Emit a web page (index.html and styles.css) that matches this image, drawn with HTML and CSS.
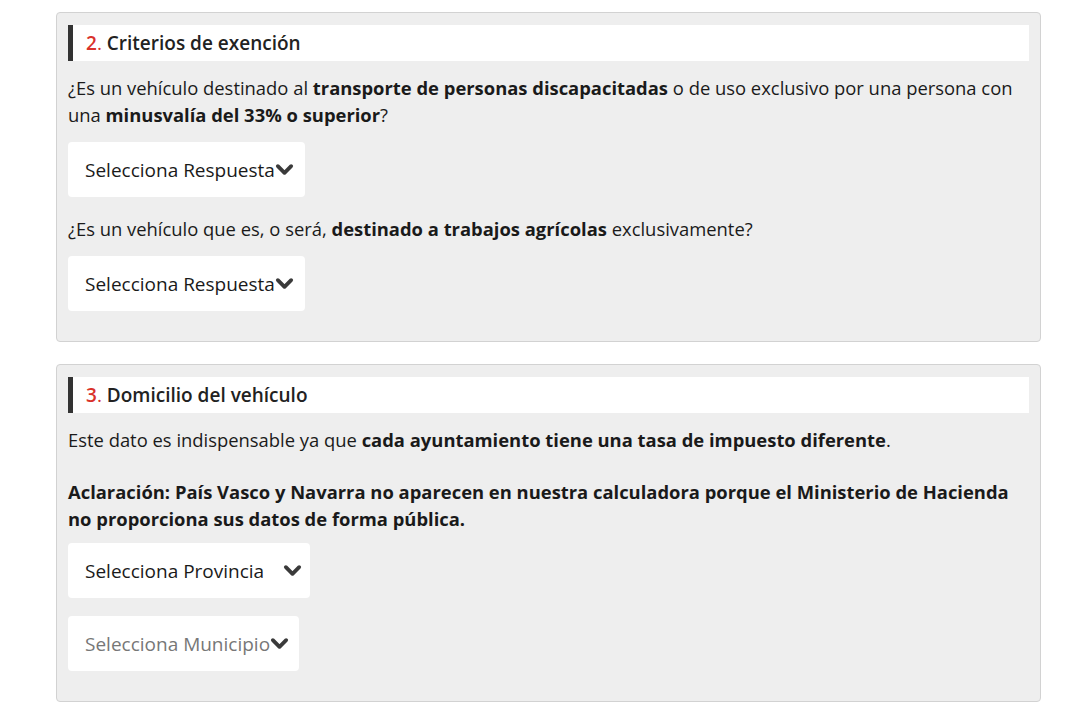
FILE: index.html
```html
<!DOCTYPE html>
<html lang="es">
<head>
    <meta charset="UTF-8">
    <title>Calculadora impuesto de circulación</title>
    <link rel="stylesheet" href="styles.css">
</head>
<body>
    <div class="wrap">
        <div class="card">
            <h3 class="step"><span class="num">2</span><span class="dot">.</span> Criterios de exención</h3>
            <p class="q q-first">¿Es un vehículo destinado al <b>transporte de personas discapacitadas</b> o de uso exclusivo por una persona con una <b>minusvalía del 33% o superior</b>?</p>
            <div class="select sel-resp">
                <span>Selecciona Respuesta</span>
                <svg class="chev" viewBox="0 0 20 14"><polyline points="3,3 10,10 17,3"/></svg>
            </div>
            <p class="q">¿Es un vehículo que es, o será, <b>destinado a trabajos agrícolas</b> exclusivamente?</p>
            <div class="select sel-resp">
                <span>Selecciona Respuesta</span>
                <svg class="chev" viewBox="0 0 20 14"><polyline points="3,3 10,10 17,3"/></svg>
            </div>
        </div>

        <div class="card">
            <h3 class="step"><span class="num">3</span><span class="dot">.</span> Domicilio del vehículo</h3>
            <p class="q q-first">Este dato es indispensable ya que <b>cada ayuntamiento tiene una tasa de impuesto diferente</b>.</p>
            <p class="q note">Aclaración: País Vasco y Navarra no aparecen en nuestra calculadora porque el Ministerio de Hacienda no proporciona sus datos de forma pública.</p>
            <div class="select sel-prov">
                <span>Selecciona Provincia</span>
                <svg class="chev" viewBox="0 0 20 14"><polyline points="3,3 10,10 17,3"/></svg>
            </div>
            <div class="select sel-muni disabled">
                <span>Selecciona Municipio</span>
                <svg class="chev" viewBox="0 0 20 14"><polyline points="3,3 10,10 17,3"/></svg>
            </div>
        </div>
    </div>
</body>
</html>
```

FILE: styles.css
```css
body {
    margin: 0;
    background-color: #fff;
    font-family: "Open Sans", sans-serif;
    color: #1a1a1a;
}
.wrap {
    width: 985px;
    padding: 12px 0 0 56px;
}
.card {
    background-color: #eeeeee;
    border: 1px solid #d2d2d2;
    border-radius: 4px;
    padding: 12px 11px 30px 11px;
    margin-bottom: 22px;
}
.step {
    margin: 0;
    height: 36px;
    line-height: 36px;
    background-color: #fff;
    border-left: 5px solid #333;
    padding-left: 13px;
    font-size: 19px;
    font-weight: 600;
    color: #222;
}
.num {
    color: #d9322b;
}
.dot {
    color: #d9322b;
    font-weight: 400;
}
.q {
    margin: 18px 0 0 0;
    font-size: 18.4px;
    line-height: 27px;
}
.q-first {
    margin-top: 13px;
}
.q b {
    font-weight: 700;
}
.note {
    margin-top: 25px;
    font-weight: 700;
}
.select {
    display: flex;
    align-items: center;
    height: 55px;
    box-sizing: border-box;
    margin-top: 14px;
    padding-left: 17px;
    background-color: #fff;
    border-radius: 4px;
    font-size: 19px;
    color: #1a1a1a;
}
.sel-resp {
    width: 237px;
}
.sel-prov {
    width: 242px;
    margin-top: 11px;
}
.sel-muni {
    width: 231px;
    margin-top: 18px;
}
.sel-prov .chev {
    margin-left: auto;
    margin-right: 8px;
}
.disabled {
    color: #777;
}
.chev {
    width: 19px;
    height: 14px;
    flex-shrink: 0;
}
.chev polyline {
    fill: none;
    stroke: #3a3a3a;
    stroke-width: 4;
    stroke-linecap: round;
    stroke-linejoin: round;
}
```
